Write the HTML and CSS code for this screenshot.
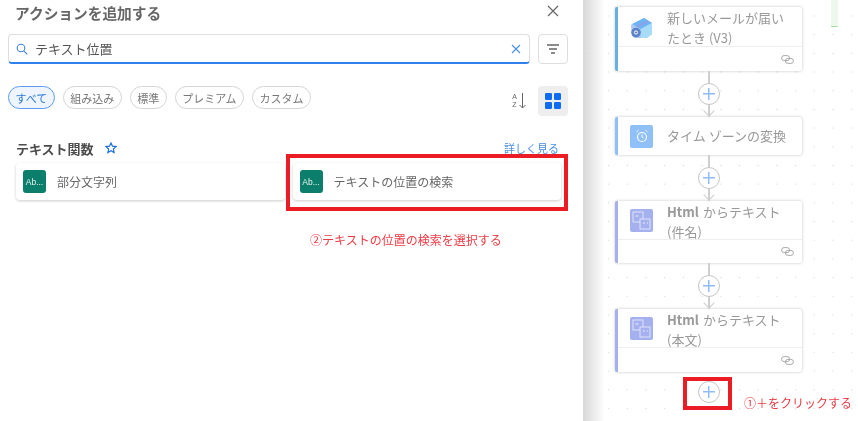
FILE: index.html
```html
<!DOCTYPE html>
<html lang="ja">
<head>
<meta charset="utf-8">
<title>アクションを追加する</title>
<link rel="stylesheet" href="styles.css">
</head>
<body>
<div class="page">
  <section class="panel">
    <header class="panel-head">
      <h1 class="title">アクションを追加する</h1>
      <svg class="close" width="14" height="14" viewBox="0 0 14 14"><path d="M2 2l10 10M12 2L2 12" stroke="#666" stroke-width="1.2" fill="none"/></svg>
    </header>
    <div class="search-row">
      <div class="search">
        <svg width="12" height="12" viewBox="0 0 12 12"><circle cx="5" cy="5" r="3.800" stroke="#3b82d6" stroke-width="1.100" fill="none"/><path d="M7.800 7.800l3.500 3.500" stroke="#3b82d6" stroke-width="1.100"/></svg>
        <span class="search-text">テキスト位置</span>
        <svg width="10" height="10" viewBox="0 0 10 10"><path d="M1 1l8 8M9 1L1 9" stroke="#4a90e2" stroke-width="1.100" fill="none"/></svg>
      </div>
      <button class="icon-btn outlined"><svg width="14" height="10" viewBox="0 0 14 10"><path d="M1 1h12M3 5h8M5 9h4" stroke="#666" stroke-width="1.300" fill="none"/></svg></button>
    </div>
    <div class="filter-row">
      <div class="chips">
        <span class="chip on">すべて</span>
        <span class="chip">組み込み</span>
        <span class="chip">標準</span>
        <span class="chip">プレミアム</span>
        <span class="chip">カスタム</span>
      </div>
      <div class="tools">
        <span class="sort">
          <span class="az"><span class="az-letter">A</span><span class="az-letter">Z</span></span>
          <svg width="7" height="16" viewBox="0 0 7 16"><path d="M3.500 0v15M.5 12l3 3 3-3" stroke="#666" stroke-width="1" fill="none"/></svg>
        </span>
        <button class="icon-btn filled"><svg width="16" height="16" viewBox="0 0 16 16" fill="#0f6cf2"><rect width="7" height="7" rx="1.200"/><rect x="9" width="7" height="7" rx="1.200"/><rect y="9" width="7" height="7" rx="1.200"/><rect x="9" y="9" width="7" height="7" rx="1.200"/></svg></button>
      </div>
    </div>
    <div class="section-head">
      <div class="section-name">
        <h2 class="section-title">テキスト関数</h2>
        <svg width="12" height="12" viewBox="0 0 12 12"><path d="M6 1l1.500 3.200 3.500.4-2.600 2.400.7 3.500L6 8.800 2.900 10.500l.7-3.500L1 4.600l3.500-.4z" stroke="#1a6fd8" stroke-width="1.200" fill="none"/></svg>
      </div>
      <a class="more">詳しく見る</a>
    </div>
    <div class="cards">
      <div class="card"><span class="ab">Ab...</span><span class="card-text">部分文字列</span></div>
      <div class="card"><span class="ab">Ab...</span><span class="card-text">テキストの位置の検索</span></div>
    </div>
    <p class="note note-two">②テキストの位置の検索を選択する</p>
    <div class="mark mark-two"></div>
  </section>

  <main class="canvas">
    <div class="flow">
      <article class="node mail">
        <div class="node-main">
          <svg class="node-icon" width="23" height="22" viewBox="0 0 23 22">
            <path d="M1 8L14 1l8 5v11l-5 4H5l-3-2z" fill="#a9c8f5"/>
            <path d="M2 7l12-6 8 5-11 6z" fill="#6db4f3"/>
            <path d="M11 12l11-6v11l-5 4h-6z" fill="#a7dcf8"/>
            <path d="M6 9l11-5.500 2 1L8 10.500z" fill="#8f9fe8"/>
            <circle cx="6" cy="15.500" r="4.800" fill="#5f83c9"/>
            <circle cx="6" cy="15.500" r="1.600" fill="none" stroke="#fff" stroke-width="1"/>
          </svg>
          <span class="node-text"><span class="text-line">新しいメールが届い</span><span class="text-line">たとき (V3)</span></span>
        </div>
        <div class="node-foot"><svg class="link" width="13" height="9" viewBox="0 0 13 9"><rect x=".6" y=".6" width="8" height="5" rx="2.500" stroke="#aaa" fill="none"/><rect x="4.400" y="3.400" width="8" height="5" rx="2.500" stroke="#aaa" fill="none"/></svg></div>
      </article>
      <div class="gap">
        <span class="line"></span>
        <span class="plus"></span>
        <span class="arrow"></span>
      </div>
      <article class="node clock">
        <div class="node-main single">
          <span class="square sky"><svg width="14" height="14" viewBox="0 0 14 14"><circle cx="7" cy="8" r="4.500" stroke="#fff" stroke-width="1.200" fill="none"/><path d="M7 5.500V8l1.500 1M1.500 3L3.500 1.200M12.500 3L10.500 1.200" stroke="#fff" stroke-width="1" fill="none"/></svg></span>
          <span class="node-text">タイム ゾーンの変換</span>
        </div>
      </article>
      <div class="gap">
        <span class="line"></span>
        <span class="plus"></span>
        <span class="arrow"></span>
      </div>
      <article class="node html html-one">
        <div class="node-main">
          <span class="square violet"><svg width="19" height="19" viewBox="0 0 19 19"><rect x="1" y="1" width="10" height="10" stroke="#dfe3fa" fill="none"/><rect x="8" y="8" width="10" height="10" stroke="#dfe3fa" fill="#a5b0ee"/><path d="M3.500 5h3M11 12h2M15 12h1" stroke="#fff" stroke-width=".8"/></svg></span>
          <span class="node-text"><span class="text-line"><b class="strong">Html</b><span class="rest">からテキスト</span></span><span class="text-line">(件名)</span></span>
        </div>
        <div class="node-foot"><svg class="link" width="13" height="9" viewBox="0 0 13 9"><rect x=".6" y=".6" width="8" height="5" rx="2.500" stroke="#aaa" fill="none"/><rect x="4.400" y="3.400" width="8" height="5" rx="2.500" stroke="#aaa" fill="none"/></svg></div>
      </article>
      <div class="gap">
        <span class="line"></span>
        <span class="plus"></span>
        <span class="arrow"></span>
      </div>
      <article class="node html">
        <div class="node-main">
          <span class="square violet"><svg width="19" height="19" viewBox="0 0 19 19"><rect x="1" y="1" width="10" height="10" stroke="#dfe3fa" fill="none"/><rect x="8" y="8" width="10" height="10" stroke="#dfe3fa" fill="#a5b0ee"/><path d="M3.500 5h3M11 12h2M15 12h1" stroke="#fff" stroke-width=".8"/></svg></span>
          <span class="node-text"><span class="text-line"><b class="strong">Html</b><span class="rest">からテキスト</span></span><span class="text-line">(本文)</span></span>
        </div>
        <div class="node-foot"><svg class="link" width="13" height="9" viewBox="0 0 13 9"><rect x=".6" y=".6" width="8" height="5" rx="2.500" stroke="#aaa" fill="none"/><rect x="4.400" y="3.400" width="8" height="5" rx="2.500" stroke="#aaa" fill="none"/></svg></div>
      </article>
      <span class="plus last"></span>
    </div>
    <div class="mark mark-one"></div>
    <p class="note note-one">①＋をクリックする</p>
    <div class="green-tab"></div>
  </main>
</div>
</body>
</html>
```

FILE: styles.css
```css
* { box-sizing: border-box; }
html, body { margin: 0; height: 100%; overflow: hidden; background: #fff; }
body { font-family: "Noto Sans CJK JP", "Noto Sans", sans-serif; color: #555; }
.page { display: flex; width: 858px; height: 421px; filter: blur(.3px); }

/* left panel */
.panel { position: relative; width: 583px; flex: none; padding: 0 15px 0 8px; background: #fff; }
.panel-head { display: flex; justify-content: space-between; align-items: center; height: 25px; padding: 0 8px 0 7px; }
.title { margin: 0; font-size: 14.700px; font-weight: 700; color: #666; line-height: 25px; }
.close { margin-top: -3px; }
.search-row { display: flex; gap: 8px; margin-top: 9px; }
.search { flex: 1; height: 30px; display: flex; align-items: center; padding: 0 8px 0 7px; border: 1px solid #dedede; border-bottom: 2px solid #2f80ed; border-radius: 4px; }
.search-text { flex: 1; margin-left: 7px; font-size: 13px; color: #555; }
.icon-btn { width: 30px; height: 30px; padding: 0; display: flex; align-items: center; justify-content: center; border-radius: 4px; background: #fff; }
.outlined { border: 1px solid #dedede; }
.filled { border: 0; background: #eeeeee; }
.filter-row { display: flex; justify-content: space-between; align-items: flex-start; margin-top: 22px; }
.chips { display: flex; gap: 8px; }
.chip { height: 23px; padding: 0 6.500px; display: flex; align-items: center; border: 1px solid #d5d5d5; border-radius: 12px; font-size: 11px; color: #777; }
.chip.on { border-color: #5b9cf0; background: #eef5fe; color: #2a76d6; }
.tools { display: flex; align-items: center; gap: 12px; }
.sort { display: flex; align-items: center; gap: 2px; }
.az { display: flex; flex-direction: column; }
.az-letter { display: block; height: 8px; font-family: "Liberation Sans", sans-serif; font-size: 7px; line-height: 8px; color: #666; }
.section-head { display: flex; justify-content: space-between; align-items: center; margin-top: 21px; height: 22px; padding: 0 9px 0 8px; }
.section-name { display: flex; align-items: center; gap: 11px; }
.section-title { margin: 0; font-size: 13px; font-weight: 700; color: #4c4c4c; }
.more { font-size: 11px; color: #4a8fe0; }
.cards { display: flex; gap: 8px; margin-top: 4px; padding: 0 7px 0 8px; }
.card { flex: 1; height: 37px; display: flex; align-items: center; gap: 11px; padding: 0 7px; border-radius: 4px; background: #fff; box-shadow: 0 1px 3px rgba(0,0,0,.2); }
.ab { width: 23px; height: 23px; display: flex; align-items: center; justify-content: center; border-radius: 3px; background: #0b7f6b; color: #e6f3f0; font-size: 8.500px; font-family: "Liberation Sans", sans-serif; }
.card-text { font-size: 12px; color: #666; }
.note { position: absolute; margin: 0; font-size: 12px; line-height: 16px; color: #ee3b44; white-space: nowrap; }
.note-two { left: 310px; top: 232px; }
.mark { position: absolute; border: 4px solid #ec1c24; }
.mark-two { left: 286px; top: 154px; width: 282px; height: 57px; }

/* canvas */
.canvas { position: relative; flex: 1; background-color: #fff; background-image: radial-gradient(circle, #d5d5d5 .7px, transparent 1px); background-size: 18.700px 18.700px; background-position: -2.350px 6.650px; }
.canvas::before { content: ""; position: absolute; left: 0; top: 0; bottom: 0; width: 22px; background: linear-gradient(90deg, #d8d8d8, rgba(255,255,255,0)); }
.flow { position: relative; display: flex; flex-direction: column; width: 187px; margin: 7px 0 0 32px; }
.node { display: flex; flex-direction: column; border-radius: 2px; border-left: 3px solid #8fc0f8; background: #fff; box-shadow: 0 0 3px rgba(0,0,0,.25); height: 63px; }
.mail { border-left-color: #68b0e2; height: 64px; }
.clock { height: 38px; }
.html { border-left-color: #a5b0ee; }
.html-one { height: 62px; }
.node-main { display: flex; gap: 14px; padding: 1px 12px 0 12px; height: 39px; flex: none; align-items: flex-start; }
.single { align-items: center; padding-top: 0; height: 100%; }
.html .node-main { height: 38px; }
.node-text { font-size: 13px; line-height: 19.500px; color: #999; }
.text-line { display: flex; gap: 4px; white-space: pre; }
.strong { font-weight: 700; }
.node-icon { flex: none; margin-top: 9px; }
.html .square { margin-top: 7px; }
.square { flex: none; width: 23px; height: 23px; display: flex; align-items: center; justify-content: center; border-radius: 2px; }
.sky { background: #8fc0f8; }
.violet { background: #a5b0ee; }
.node-foot { flex: 1; display: flex; align-items: center; justify-content: flex-end; padding-right: 8px; border-top: 1px solid #eee; }
.gap { position: relative; display: flex; flex-direction: column; align-items: center; height: 46px; flex: none; }
.line { width: 2px; height: 100%; background: #cfcfcf; }
.plus { position: absolute; left: 50%; top: 12px; margin-left: -11px; width: 22px; height: 22px; border: 1px solid #c6c6c6; border-radius: 50%; background-color: #fff; background-image: linear-gradient(#8fbcf7, #8fbcf7), linear-gradient(#8fbcf7, #8fbcf7); background-size: 12px 1.500px, 1.500px 12px; background-position: center; background-repeat: no-repeat; }
.arrow { position: absolute; left: 50%; bottom: 2px; margin-left: -4px; width: 8px; height: 8px; border-right: 1.500px solid #cfcfcf; border-bottom: 1.500px solid #cfcfcf; transform: rotate(45deg); }
.last { top: auto; bottom: -31px; }
.mark-one { left: 100px; top: 377px; width: 49px; height: 33px; }
.note-one { left: 161px; top: 395px; }
.green-tab { position: absolute; left: 248px; top: 0; width: 7px; height: 27px; background: #eef9ee; border-bottom: 1px solid #a8dfa8; }
```
